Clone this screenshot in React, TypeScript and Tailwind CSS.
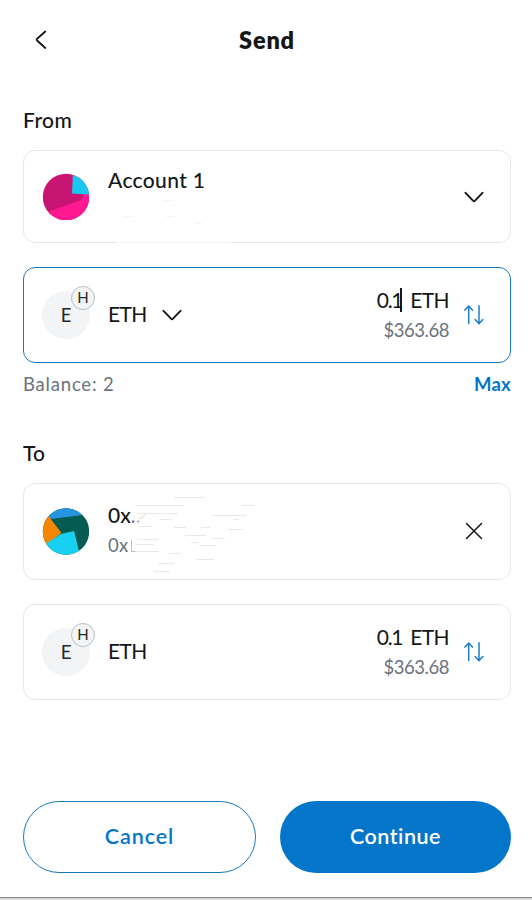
import type { ReactNode } from "react";

function Chevron({ className }: { className: string }) {
  return (
    <svg className={className} width="20" height="12" viewBox="0 0 20 12" fill="none" stroke="#141618" strokeWidth="1.9" strokeLinecap="round" strokeLinejoin="round">
      <path d="M1.5 1.8 L9 9.7 Q10 10.7 11 9.7 L18.5 1.8" />
    </svg>
  );
}

function Swap() {
  return (
    <svg className="ml-[13px] block h-6 w-6 shrink-0" viewBox="0 0 24 24" fill="none" stroke="#1c7dc8" strokeWidth="1.5" strokeLinecap="round" strokeLinejoin="round">
      <path d="M6.7 20.4V3.2M2.9 7.1L6.7 3L10.4 7.1M17 2.8V20.2M13.2 16.6L17 20.7L20.9 16.6" />
    </svg>
  );
}

function Card({ className, children }: { className: string; children: ReactNode }) {
  return <section className={`flex shrink-0 items-center rounded-xl border pl-[18px] pr-6 ${className}`}>{children}</section>;
}

function TokenIcon() {
  return (
    <div className="relative flex h-12 w-12 shrink-0 items-center justify-center rounded-full bg-[#f2f4f6] text-[18.5px] leading-6 text-[#24272a]">
      <span>E</span>
      <div className="absolute -top-[5px] left-[29px] flex h-6 w-6 items-center justify-center rounded-full border border-[#bbc0c5] bg-[#f2f4f6] pb-0.5 text-[15px]">H</div>
    </div>
  );
}

function Amount({ editing = false }: { editing?: boolean }) {
  return (
    <div className="ml-auto text-right">
      <div className="flex h-[30px] items-center justify-end text-[21px] leading-[30px]">
        <span className="relative tracking-[-1.3px]">
          0.1
          {editing && <i className="absolute right-0 top-[3px] h-6 w-0.5 bg-[#141618]" />}
        </span>
        <span className="ml-2 tracking-[-0.6px]">ETH</span>
      </div>
      <div className="h-[30px] text-[18.5px] leading-[31px] tracking-[-0.45px] text-[#6a737d]">$363.68</div>
    </div>
  );
}

export default function App() {
  return (
    <main className="flex h-[900px] w-[532px] flex-col overflow-hidden bg-white font-['Lato',sans-serif] text-[#141618]">
      <div className="flex h-[897px] shrink-0 flex-col pl-[23px] pr-[21px]">
        <header className="grid h-[80px] shrink-0 grid-cols-[48px_1fr_48px] items-center">
          <svg className="-mt-px ml-[11px]" width="14" height="20" viewBox="0 0 14 20" fill="none" stroke="#141618" strokeWidth="1.8" strokeLinecap="round" strokeLinejoin="round">
            <path d="M11.3 1.5L3.1 8.7Q2.2 9.6 3.1 10.5L11.3 18" />
          </svg>
          <h1 className="-mt-px text-center text-[23.5px] font-extrabold leading-8 tracking-[0.8px]">Send</h1>
        </header>
        <h2 className="mt-[25px] h-[30px] shrink-0 text-[21px] font-medium leading-[30px] tracking-[0.4px]">From</h2>
        <Card className="relative mt-[15px] h-[93px] border-[#e4e6e8]">
          <svg className="h-[47px] w-[47px] shrink-0" viewBox="0 0 47 47">
            <defs><clipPath id="from-avatar"><circle cx="24" cy="24" r="23.2" /></clipPath></defs>
            <g clipPath="url(#from-avatar)">
              <path fill="#c81472" d="M0 0H48V48H0Z" />
              <path fill="#ff188f" d="M0 41L39 27Q42 25 41 21H48V48H0Z" />
              <path fill="#18c8ef" d="M31 0L30 20.5L48 21.5V0Z" />
            </g>
          </svg>
          <div className="-mt-[33px] ml-[19px] text-[21px] font-medium leading-[30px] tracking-[0.35px]">Account 1</div>
          <Chevron className="ml-auto mr-[2px]" />
          <svg className="absolute left-[92px] top-[48px]" width="132" height="46" fill="none">
            <path stroke="white" strokeWidth="2" strokeOpacity=".55" d="M0 43.5H115" />
            <path stroke="#f5f5f5" d="M48 1.5H57M8 17.5H17M50 17.5H58M80 24.5H86" />
          </svg>
        </Card>
        <Card className="mt-6 h-24 border-[#1879b8]">
          <TokenIcon />
          <div className="-mt-0.5 ml-[18px] text-[21px] leading-[30px] tracking-[-0.6px]">ETH</div>
          <Chevron className="ml-[15px]" />
          <Amount editing />
          <Swap />
        </Card>
        <div className="flex h-[42px] shrink-0 items-center justify-between pt-px text-[18.5px]">
          <span className="tracking-[0.8px] text-[#6a737d]">Balance: 2</span>
          <span className="font-bold tracking-[0.25px] text-[#0376c9]">Max</span>
        </div>
        <h2 className="mt-[33px] h-[30px] shrink-0 text-[21px] font-medium leading-[30px]">To</h2>
        <Card className="relative mt-[15px] h-[97px] border-[#e4e6e8]">
          <svg className="-mt-px h-[47px] w-[47px] shrink-0" viewBox="0 0 47 47">
            <defs><clipPath id="to-avatar"><circle cx="24" cy="23.5" r="23.2" /></clipPath></defs>
            <g clipPath="url(#to-avatar)">
              <path fill="#045b51" d="M0 0H48V47H0Z" />
              <path fill="#2794df" d="M0 0H48V6L8 11Z" />
              <path fill="#f58604" d="M0 0L8 10L19.5 25L0 40Z" />
              <path fill="#18d0f2" d="M0 38L19 26L32 23L38 47H0Z" />
            </g>
          </svg>
          <div className="-mt-[3px] ml-[19px]">
            <div className="flex text-[21px] font-medium leading-[30px]">0x<span className="bg-gradient-to-r from-[#5f6468] to-[#e7e7e7] bg-clip-text text-transparent">..</span></div>
            <div className="text-[18.5px] leading-[31px] tracking-[0.3px] text-[#6a737d]">0x</div>
          </div>
          <svg className="absolute left-[104px] top-[10px]" width="130" height="82" fill="none">
            <path stroke="#babdc0" d="M3.5 46V57.5H8" />
            <path stroke="#d5d7d9" d="M11 25Q15 25 17 20" />
            <path stroke="#e8e8e8" d="M46 3.5H77M7 11.5H56M114 11.5H126M10 19.5H50M85 21.5H118M31 25.5H43M106 25.5H111M10 32.5H24M46 33.5H58M73 33.5H82M100 35.5H115M57 41.5H78M9 45.5H30M84 44.5H97M63 48.5H70M7 50.5H26M71 51.5H88M7 57.5H31M41 59.5H53M68 65.5H86M30 69.5H46M26 77.5H42" />
          </svg>
          <svg className="-mt-0.5 ml-auto mr-[3px]" width="18" height="18" viewBox="0 0 18 18" fill="none" stroke="#141618" strokeWidth="1.5" strokeLinecap="round">
            <path d="M1.5 1.5L16.5 16.5M16.5 1.5L1.5 16.5" />
          </svg>
        </Card>
        <Card className="mt-6 h-24 border-[#e4e6e8]">
          <TokenIcon />
          <div className="-mt-0.5 ml-[18px] text-[21px] leading-[30px] tracking-[-0.6px]">ETH</div>
          <Amount />
          <Swap />
        </Card>
        <footer className="mt-[101px] grid h-[72px] shrink-0 grid-cols-[233px_231px] gap-6 text-[21.5px] font-semibold">
          <button className="rounded-full border border-[#1879b8] pb-px tracking-[0.9px] text-[#0376c9]">Cancel</button>
          <button className="rounded-full bg-[#0376c9] pb-px tracking-[0.5px] text-white">Continue</button>
        </footer>
      </div>
      <div className="h-[3px] shrink-0 border-t border-[#88888b] bg-[#dadada]" />
    </main>
  );
}
